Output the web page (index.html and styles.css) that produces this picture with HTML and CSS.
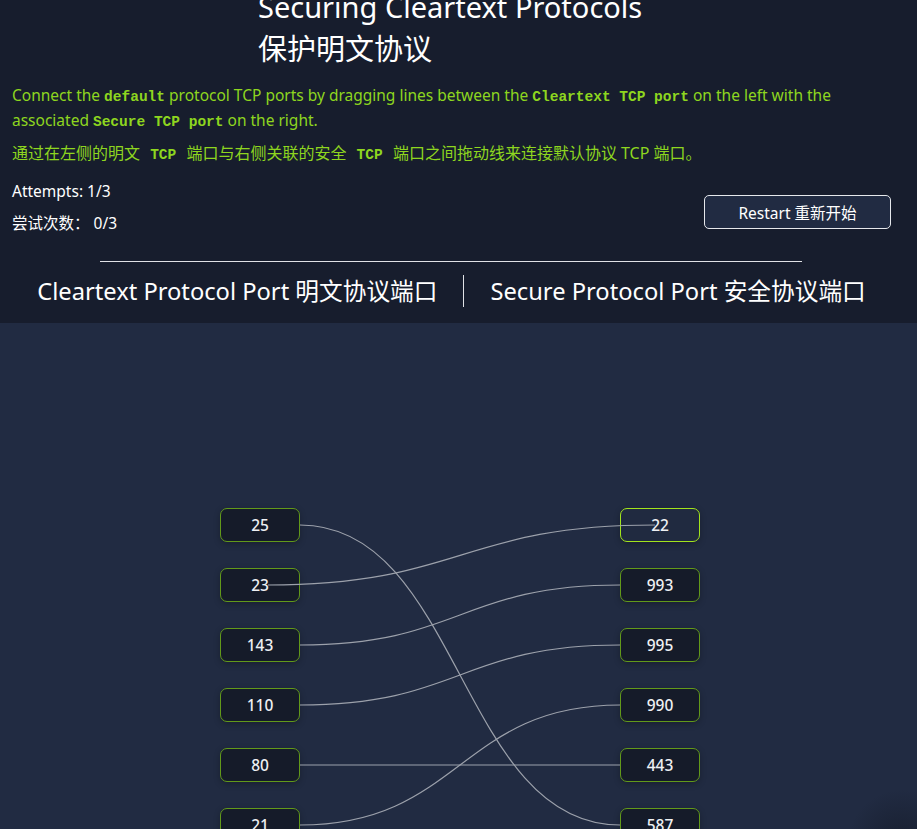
FILE: index.html
```html
<!DOCTYPE html>
<html lang="en">
<head>
<meta charset="utf-8">
<title>Securing Cleartext Protocols</title>
<link rel="stylesheet" href="styles.css">
</head>
<body>
<header class="top">
  <h1 class="title">Securing Cleartext Protocols<br>保护明文协议</h1>
  <p class="intro">Connect the <code>default</code> protocol TCP ports by dragging lines between the <code>Cleartext TCP port</code> on the left with the associated <code>Secure TCP port</code> on the right.</p>
  <p class="intro zh">通过在左侧的明文 <code>TCP</code> 端口与右侧关联的安全 <code>TCP</code> 端口之间拖动线来连接默认协议 TCP 端口。</p>
  <div class="status">
    <div class="attempts">
      <div>Attempts: 1/3</div>
      <div>尝试次数： 0/3</div>
    </div>
    <button class="restart" type="button">Restart 重新开始</button>
  </div>
  <div class="rule"></div>
  <div class="heads">
    <div class="head">Cleartext Protocol Port 明文协议端口</div>
    <div class="sep"></div>
    <div class="head">Secure Protocol Port 安全协议端口</div>
  </div>
</header>
<main class="board">
  <div class="col">
    <div class="port">25</div>
    <div class="port">23</div>
    <div class="port">143</div>
    <div class="port">110</div>
    <div class="port">80</div>
    <div class="port">21</div>
  </div>
  <div class="col">
    <div class="port active">22</div>
    <div class="port">993</div>
    <div class="port">995</div>
    <div class="port">990</div>
    <div class="port">443</div>
    <div class="port">587</div>
  </div>
  <svg class="wires" width="917" height="506" viewBox="0 0 917 506" aria-hidden="true">
    <g fill="none" stroke="#9ca1ab" stroke-width="1.2">
      <path d="M300 202 C460 202 460 502 620 502"/>
      <path d="M268 262 C461 262 461 202 655 202"/>
      <path d="M300 322 C460 322 460 262 620 262"/>
      <path d="M300 382 C460 382 460 322 620 322"/>
      <path d="M300 442 L620 442"/>
      <path d="M300 502 C460 502 460 382 620 382"/>
    </g>
  </svg>
  <div class="blob"></div>
</main>
</body>
</html>
```
FILE: styles.css
```css
* { box-sizing: border-box; }
html, body {
  margin: 0;
  padding: 0;
  height: 100%;
  overflow: hidden;
}
body {
  background: #212b42;
  font-family: "Noto Sans", "Noto Sans CJK SC", sans-serif;
  color: #ffffff;
}
.top {
  background: #171d2d;
  padding: 0 12px 16px;
}
.title {
  margin: -14px 0 0 246px;
  font-weight: 400;
  font-size: 29px;
  line-height: 42px;
  color: #ffffff;
}
.intro {
  margin: 13px 0 0;
  font-size: 15.5px;
  line-height: 25px;
  color: #8ed61f;
}
.intro.zh {
  margin-top: 8px;
  font-size: 16px;
}
code {
  font-family: "Liberation Mono", "DejaVu Sans Mono", monospace;
  font-weight: 700;
  font-size: 14.5px;
  line-height: 1;
}
.zh code {
  padding: 0 6px;
}
.status {
  margin-top: 9px;
  display: flex;
  justify-content: space-between;
  align-items: flex-end;
  padding-right: 14px;
}
.attempts {
  font-size: 15.5px;
  line-height: 32px;
}
.restart {
  width: 187px;
  height: 34px;
  margin-bottom: 10px;
  background: #212b42;
  color: #ffffff;
  border: 1px solid #e6e8ec;
  border-radius: 5px;
  font-family: "Noto Sans", "Noto Sans CJK SC", sans-serif;
  font-size: 15.5px;
}
.rule {
  margin: 22px 103px 0 88px;
  height: 1px;
  background: #e0e2e6;
}
.heads {
  margin-top: 13px;
  display: flex;
  align-items: center;
  justify-content: center;
  gap: 26px;
  padding-right: 14px;
}
.head {
  font-size: 23.7px;
  line-height: 32px;
}
.sep {
  width: 1px;
  height: 32px;
  background: #e0e2e6;
}
.board {
  position: relative;
  display: flex;
  gap: 320px;
  padding: 185px 0 0 220px;
  height: 506px;
}
.col {
  display: flex;
  flex-direction: column;
  gap: 26px;
}
.port {
  flex-shrink: 0;
  width: 80px;
  height: 34px;
  display: flex;
  align-items: center;
  justify-content: center;
  background: #151b29;
  border: 1px solid #62991a;
  border-radius: 7px;
  font-size: 15.5px;
  font-weight: 500;
  color: #eef0f3;
  box-shadow: 0 2px 6px rgba(0, 0, 0, 0.25);
}
.port.active {
  border-color: #a2e41d;
  background: #202a40;
}
.wires {
  position: absolute;
  left: 0;
  top: 0;
}
.blob {
  position: absolute;
  right: -40px;
  bottom: -70px;
  width: 110px;
  height: 110px;
  border-radius: 50%;
  background: radial-gradient(circle, rgba(20, 26, 40, 0.7), rgba(33, 43, 66, 0) 70%);
}
```
